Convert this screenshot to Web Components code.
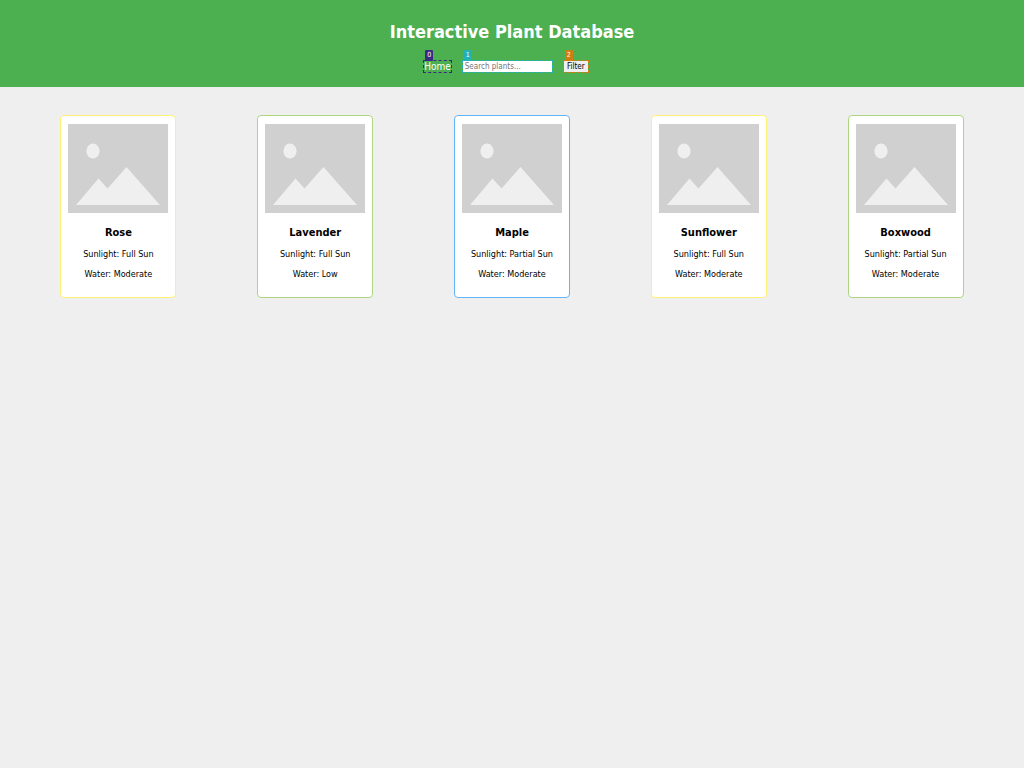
<!DOCTYPE html>
<html lang="en">
<head>
<meta charset="utf-8">
<title>Interactive Plant Database</title>
<style>
body { margin: 0; background: #efefef; color: #000; font-family: "DejaVu Sans Condensed", "DejaVu Sans", sans-serif; }
</style>
</head>
<body>
<plant-app></plant-app>

<template id="app-tpl">
  <style>
    :host { display: block; }
    main { display: flex; flex-wrap: wrap; justify-content: space-around; padding: 28px 20px; }
  </style>
  <plant-header></plant-header>
  <main>
    <plant-card tone="yellow"><span slot="name">Rose</span><span slot="sun">Full Sun</span><span slot="water">Moderate</span></plant-card>
    <plant-card tone="green"><span slot="name">Lavender</span><span slot="sun">Full Sun</span><span slot="water">Low</span></plant-card>
    <plant-card tone="blue"><span slot="name">Maple</span><span slot="sun">Partial Sun</span><span slot="water">Moderate</span></plant-card>
    <plant-card tone="yellow"><span slot="name">Sunflower</span><span slot="sun">Full Sun</span><span slot="water">Moderate</span></plant-card>
    <plant-card tone="green"><span slot="name">Boxwood</span><span slot="sun">Partial Sun</span><span slot="water">Moderate</span></plant-card>
  </main>
</template>

<template id="header-tpl">
  <style>
    :host { display: block; }
    header { background: #4caf50; color: #fff; text-align: center; padding: 20px 20px 15px; }
    h1 { margin: 0; font-size: 18px; line-height: 24px; }
    nav { display: flex; justify-content: center; align-items: center; gap: 12px; margin-top: 17px; padding-right: 12px; }
    a { display: block; color: #fff; text-decoration: none; font-size: 10px; line-height: 11px; }
    input, button { box-sizing: border-box; display: block; margin: 0; height: 11px; border: 0; border-radius: 0; font: inherit; font-size: 8px; line-height: 11px; }
    input { width: 89px; padding: 0 2px; background: #fff; color: #000; }
    input::placeholder { color: #757575; opacity: 1; }
    button { width: 24px; padding: 0; background: #efefef; color: #000; text-align: center; }
  </style>
  <header>
    <h1>Interactive Plant Database</h1>
    <nav>
      <marked-item number="0" style="--mark: #3b2a83"><a href="#">Home</a></marked-item>
      <marked-item number="1" style="--mark: #22b1b5"><input type="text" placeholder="Search plants..." aria-label="Search plants"></marked-item>
      <marked-item number="2" style="--mark: #cf7d10"><button type="button">Filter</button></marked-item>
    </nav>
  </header>
</template>

<template id="mark-tpl">
  <style>
    :host { display: block; position: relative; outline: 1px dashed var(--mark); }
    .badge { position: absolute; left: 1px; bottom: 100%; min-width: 8px; box-sizing: border-box; background: var(--mark); color: #fff; font-size: 7px; line-height: 11px; text-align: center; border-radius: 1px; }
  </style>
  <span class="badge"></span><slot></slot>
</template>

<template id="card-tpl">
  <style>
    :host { display: block; box-sizing: border-box; width: 116px; padding: 8px 7px 9px; border: 1px solid var(--tone); border-radius: 4px; background: #fff; text-align: center; --tone: #fff176; }
    :host([tone="green"]) { --tone: #aed581; }
    :host([tone="blue"]) { --tone: #64b5f6; }
    svg { display: block; width: 100%; height: 89px; }
    h2 { margin: 13px 0 8px; font-size: 11px; line-height: 14px; }
    p { margin: 0 0 8px; font-size: 9px; line-height: 12px; white-space: nowrap; }
  </style>
  <svg viewBox="0 0 100 89" preserveAspectRatio="none" aria-hidden="true">
    <path fill="#d0d0d0" d="M0 0H100V89H0Z"/>
    <ellipse cx="25" cy="27" rx="6.6" ry="7.6" fill="#efefef"/>
    <path fill="#efefef" d="M8 81 30.500 54.500 39.500 64.500 58.500 43 92 81Z"/>
  </svg>
  <h2><slot name="name"></slot></h2>
  <p>Sunlight: <slot name="sun"></slot></p>
  <p>Water: <slot name="water"></slot></p>
</template>

<script>
class TemplateElement extends HTMLElement {
  constructor() {
    super();
    this.attachShadow({ mode: "open" }).append(
      document.getElementById(this.constructor.template).content.cloneNode(true));
  }
}
class PlantCard extends TemplateElement { static template = "card-tpl"; }
class MarkedItem extends TemplateElement {
  static template = "mark-tpl";
  connectedCallback() {
    this.shadowRoot.querySelector(".badge").textContent = this.getAttribute("number");
  }
}
class PlantHeader extends TemplateElement { static template = "header-tpl"; }
class PlantApp extends TemplateElement { static template = "app-tpl"; }
customElements.define("plant-card", PlantCard);
customElements.define("marked-item", MarkedItem);
customElements.define("plant-header", PlantHeader);
customElements.define("plant-app", PlantApp);
</script>
</body>
</html>
